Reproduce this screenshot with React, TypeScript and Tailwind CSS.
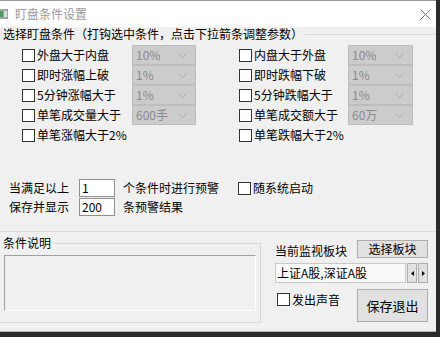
import React from "react";

const leftRows = [
  { label: "外盘大于内盘", value: "10%" },
  { label: "即时涨幅上破", value: "1%" },
  { label: "5分钟涨幅大于", value: "1%" },
  { label: "单笔成交量大于", value: "600手" },
  { label: "单笔涨幅大于2%", value: "" },
];

const rightRows = [
  { label: "内盘大于外盘", value: "10%" },
  { label: "即时跌幅下破", value: "1%" },
  { label: "5分钟跌幅大于", value: "1%" },
  { label: "单笔成交额大于", value: "60万" },
  { label: "单笔跌幅大于2%", value: "" },
];

function Check() {
  return <span className="w-[13px] h-[13px] shrink-0 border border-[#333] bg-white" />;
}

function Combo({ value, width }: { value: string; width: string }) {
  return (
    <div
      className={`${width} h-[20px] shrink-0 flex items-center justify-between bg-[#cccccc] border border-[#bdbdbd] pl-[3px] pr-[8px] text-[#8a8a8a]`}
    >
      <span>{value}</span>
      <svg width="9" height="5" viewBox="0 0 9 5">
        <path d="M0.5 0.5 L4.5 4.5 L8.5 0.5" fill="none" stroke="#a9a9a9" strokeWidth="1" />
      </svg>
    </div>
  );
}

function ConditionCell({ label, value, labelW, comboW }: { label: string; value: string; labelW: string; comboW: string }) {
  return (
    <div className="h-[20px] flex items-center">
      <Check />
      <span className={`${labelW} ml-[2px] shrink-0 whitespace-nowrap`}>{label}</span>
      {value && <Combo value={value} width={comboW} />}
    </div>
  );
}

export default function App() {
  return (
    <div className="w-[440px] h-[337px] flex flex-col overflow-hidden bg-[#f0f0f0] border-r-4 border-b-[5px] border-[#2b2b2b] text-[12px] leading-[12px] text-black font-['Noto_Sans_CJK_SC',sans-serif]">
      {/* title bar */}
      <div className="h-[27px] shrink-0 flex items-center bg-white border-t border-[#9a9a9a]">
        <svg width="8" height="10" viewBox="0 0 8 10" className="shrink-0">
          <rect x="0" y="0" width="8" height="10" fill="#9aa7a0" />
          <rect x="0" y="2" width="3" height="6" fill="#4f9a5f" />
          <rect x="4" y="2" width="3" height="6" fill="#d8dee0" />
        </svg>
        <span className="ml-[7px] text-[#9a9a9a]">盯盘条件设置</span>
        <svg width="11" height="11" viewBox="0 0 11 11" className="ml-auto mr-[5px]">
          <path d="M0.5 0.5 L10.5 10.5 M10.5 0.5 L0.5 10.5" stroke="#777" strokeWidth="1" />
        </svg>
      </div>

      {/* group 1 */}
      <div className="h-[14px] flex items-center pl-[3px]">
        <span className="whitespace-nowrap">选择盯盘条件（打钩选中条件，点击下拉箭条调整参数）</span>
        <span className="flex-1 h-px bg-[#d9d9d9] ml-[2px]" />
      </div>
      <div className="mt-[4px] pl-[22px] grid grid-cols-[217px_1fr]">
        <div className="flex flex-col">
          {leftRows.map((r) => (
            <ConditionCell key={r.label} label={r.label} value={r.value} labelW="w-[95px]" comboW="w-[64px]" />
          ))}
        </div>
        <div className="flex flex-col">
          {rightRows.map((r) => (
            <ConditionCell key={r.label} label={r.label} value={r.value} labelW="w-[94px]" comboW="w-[65px]" />
          ))}
        </div>
      </div>

      <div className="mt-[34px] pl-[9px] flex flex-col gap-[1px]">
        <div className="h-[18px] flex items-center">
          <span className="w-[70px]">当满足以上</span>
          <div className="w-[36px] h-[18px] bg-white border border-[#8f8f8f] pl-[2px] flex items-center">1</div>
          <span className="ml-[8px] w-[115px] whitespace-nowrap">个条件时进行预警</span>
          <Check />
          <span className="ml-[2px]">随系统启动</span>
        </div>
        <div className="h-[18px] flex items-center">
          <span className="w-[70px]">保存并显示</span>
          <div className="w-[36px] h-[18px] bg-white border border-[#8f8f8f] pl-[2px] flex items-center">200</div>
          <span className="ml-[8px]">条预警结果</span>
        </div>
      </div>
      <div className="mt-[15px] h-px bg-[#d9d9d9]" />

      {/* bottom area */}
      <div className="flex-1 flex">
        <div className="w-[261px] mt-[5px] flex flex-col">
          <div className="h-[12px] flex">
            <span className="pl-[3px] whitespace-nowrap">条件说明</span>
            <span className="flex-1 self-end h-[6px] ml-[2px] border-t border-r border-[#d9d9d9]" />
          </div>
          <div className="border-r border-b border-[#d9d9d9] pt-[6px] pb-[11px]">
            <div className="ml-[4px] w-[252px] h-[56px] border-t border-l border-[#a0a0a0] border-b border-r border-b-white border-r-white" />
          </div>
        </div>

        <div className="ml-[14px] w-[153px] mt-[8px] flex flex-col">
          <div className="h-[18px] flex items-center justify-between">
            <span className="pt-[3px] whitespace-nowrap">当前监视板块</span>
            <button className="w-[71px] h-[18px] bg-[#e1e1e1] border border-[#adadad] flex items-center justify-center">选择板块</button>
          </div>
          <div className="mt-[5px] h-[20px] flex gap-[1px]">
            <div className="w-[132px] h-[20px] bg-[#f9f9f9] border border-[#c9c9c9] pl-[1px] flex items-center whitespace-nowrap">
              上证A股,深证A股
            </div>
            <button className="w-[10px] h-[20px] bg-[#e1e1e1] border border-[#adadad] flex items-center justify-center">
              <svg width="3" height="5" viewBox="0 0 3 5"><path d="M3 0 L0 2.5 L3 5 Z" fill="#000" /></svg>
            </button>
            <button className="w-[10px] h-[20px] bg-[#e1e1e1] border border-[#adadad] flex items-center justify-center">
              <svg width="3" height="5" viewBox="0 0 3 5"><path d="M0 0 L3 2.5 L0 5 Z" fill="#000" /></svg>
            </button>
          </div>
          <div className="mt-[6px] h-[33px] flex items-start">
            <div className="ml-[2px] mt-[4px] flex items-center">
              <Check />
              <span className="ml-[2px] whitespace-nowrap">发出声音</span>
            </div>
            <button className="ml-auto w-[71px] h-[33px] bg-[#e1e1e1] border border-[#adadad] flex items-center justify-center text-[13px]">
              保存退出
            </button>
          </div>
        </div>
      </div>
      <div className="h-px bg-[#b4b4b4]" />
    </div>
  );
}
